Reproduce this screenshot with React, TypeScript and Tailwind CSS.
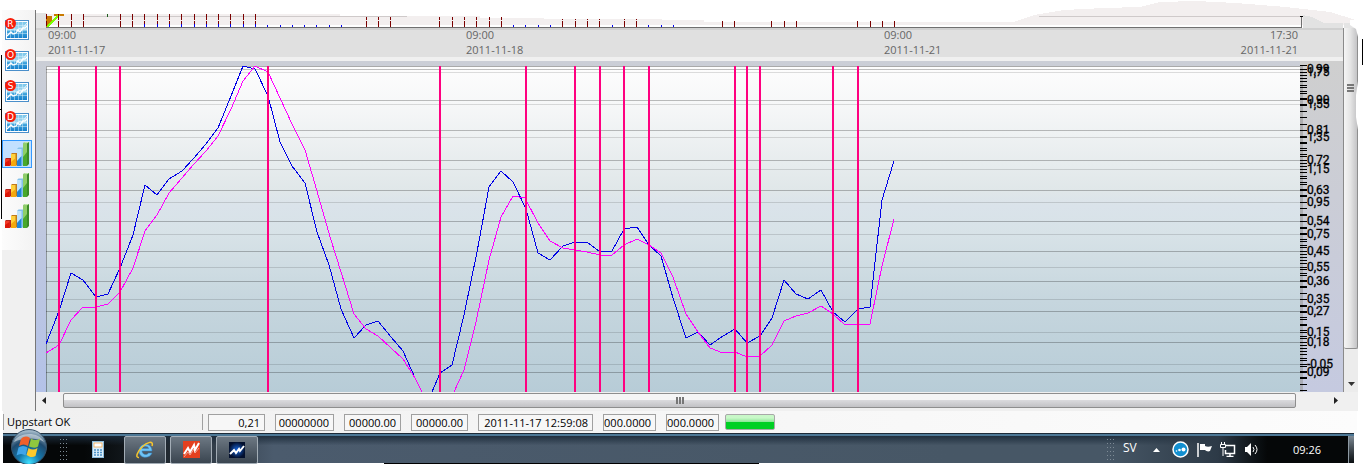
import type { ReactNode } from "react";

const PRIMARY_GRID = [69, 100, 130, 160, 190, 221, 251, 281, 311, 342, 372];
const SECONDARY_GRID = [72, 104, 137, 169, 202, 234, 267, 299, 332, 364];
const PRIMARY_LABELS = ["0,99", "0,90", "0,81", "0,72", "0,63", "0,54", "0,45", "0,36", "0,27", "0,18", "0,09"];
const SECONDARY_LABELS = ["1,75", "1,55", "1,35", "1,15", "0,95", "0,75", "0,55", "0,35", "0,15", "-0,05"];

const SIGNALS = [59, 96, 120, 268, 440, 526, 575, 600, 624, 649, 735, 747, 760, 833, 858];

const FAST_LINE = [
  "46,344 59,311 71,273 83,280 96,297 108,294 120,268 133,235 145,185 157,195 169,179 182,171 194,158 206,144 218,128 231,96 243,66 255,69 268,96 280,142 292,166 305,183 317,232 329,265 341,309 354,338 366,325 378,321 391,337 403,351 415,378 422,392",
  "432,392 440,373 452,365 464,315 477,252 489,187 501,171 513,182 526,209 538,253 550,260 563,246 575,242 587,242 600,252 612,251 624,229 637,227 649,245 661,256 673,298 686,338 698,332 710,345 723,336 735,329 747,343 760,336 772,318 784,280 796,294 808,299 821,290 833,312 845,322 858,309 870,307 882,200 894,161",
];
const SLOW_LINE = [
  "46,353 59,345 71,320 83,307 96,307 108,304 120,292 133,268 145,231 157,215 169,193 182,178 194,164 206,151 218,136 231,109 243,81 255,66 268,72 280,98 292,124 305,150 317,191 331,240 341,272 354,314 366,329 378,336 391,348 403,359 415,378 422,392",
  "454,392 464,370 476,322 489,260 501,217 513,196 525,198 538,223 550,241 563,248 575,250 587,252 600,255 612,255 624,245 637,239 649,245 661,253 673,277 686,314 698,332 710,348 723,353 735,352 747,357 760,356 772,345 784,321 796,316 808,313 821,306 833,314 845,325 858,324 870,324 882,266 894,219",
];

const RED_TICKS = [
  58, 71, 83, 120, 132, 144, 157, 169, 181, 194, 206, 218, 230, 243, 255, 366, 378, 390, 439, 452, 464, 476, 489, 501,
  562, 575, 587, 599, 624, 636, 722, 734, 771, 784, 796, 857, 870, 882, 894,
];
const BLUE_TICKS = [267, 280, 292, 304, 316, 329, 341, 513, 525, 538, 550, 612, 648, 661, 673];

const READOUTS = [
  { id: "value", text: "0,21", width: "w-[57px]" },
  { id: "volume", text: "00000000", width: "w-[59px]" },
  { id: "high", text: "00000.00", width: "w-[57px]" },
  { id: "low", text: "00000.00", width: "w-[57px]" },
  { id: "time", text: "2011-11-17 12:59:08", width: "w-[115px]" },
  { id: "x", text: "000.0000", width: "w-[53px]" },
  { id: "y", text: "000.0000", width: "w-[53px]" },
];

function LineChartIcon({ letter }: { letter: string }) {
  return (
    <svg width="24" height="24" viewBox="0 0 24 24" aria-hidden="true">
      <defs>
        <linearGradient id="sheet" x1="0" y1="0" x2="0" y2="1">
          <stop offset="0" stopColor="#7cc6ea" />
          <stop offset="0.5" stopColor="#a5d9f0" />
          <stop offset="0.6" stopColor="#3fa3dc" />
          <stop offset="1" stopColor="#1580cc" />
        </linearGradient>
      </defs>
      <rect x="0.5" y="2.5" width="23" height="19" fill="#fff" stroke="#4b8fca" />
      <rect x="2" y="4" width="20" height="16" fill="url(#sheet)" />
      <path
        d="M2 7.500h20M2 11.500h20M2 15.500h20M5.500 4v16M9.500 4v16M13.500 4v16M17.500 4v16"
        stroke="#d6f0fb"
        strokeOpacity="0.5"
      />
      <path d="M2 18l2-2 2-2 2 2 3-1 2-3 2 2 3-4 2 0 2-2" fill="none" stroke="#fff" strokeWidth="1.3" />
      <path d="M11 13l4-3 2 1 5-6" fill="none" stroke="#fff" strokeOpacity="0.8" />
      <circle cx="5.500" cy="5.500" r="5.500" fill="#f71d0a" />
      <text x="5.500" y="9" textAnchor="middle" fill="#fff" fontSize="9" className="font-['DejaVu_Sans']">
        {letter}
      </text>
    </svg>
  );
}

function BarChartIcon() {
  return (
    <svg width="24" height="24" viewBox="0 0 24 24" aria-hidden="true">
      <path d="M0 17l1-1h5v7l-1 1H0z" fill="#b3221a" />
      <path d="M0 17h4.500v7H0z" fill="#f23a28" />
      <path d="M0 21l4.500-3v6H0z" fill="#dc1608" />
      <path d="M6 12l1-1h5v12l-1 1H6z" fill="#c07a1c" />
      <path d="M6 12h4.500v12H6z" fill="#ffd23c" />
      <path d="M6 20l4.500-4v8H6z" fill="#f5a80c" />
      <path d="M12 7l1.500-1.500H18V23l-1 1h-5z" fill="#84c1ea" />
      <path d="M12 7h4.500v17H12z" fill="#bfe3fa" />
      <path d="M12 19l4.500-5v10H12z" fill="#1f86d8" />
      <path d="M18 1.500L19.500 0H24v22l-2 2h-4z" fill="#3b8a26" />
      <path d="M18 1.500h4V24h-4z" fill="#8fce68" />
      <path d="M18 15l4-5v14h-4z" fill="#49a82c" />
      <path d="M18 1.500L19.500 0H24l-2 1.500z" fill="#bfe8a4" />
    </svg>
  );
}

function ToolButton({ label, selected, children }: { label: string; selected?: boolean; children: ReactNode }) {
  return (
    <button
      type="button"
      aria-label={label}
      className={
        selected
          ? "flex h-7 w-[30px] items-center justify-center border border-[#3399ff] bg-[#c2e0ff]"
          : "flex h-7 w-[30px] items-center justify-center"
      }
    >
      {children}
    </button>
  );
}

function Toolbar() {
  return (
    <aside className="mt-2.5 w-[34px] shrink-0 border-r border-[#777] bg-[#f0f0f0]">
      <div className="flex h-60 flex-col gap-[3px] bg-linear-to-r from-[#fcfcfc] to-[#f3f3f3] pt-1.5">
        {["R", "O", "S", "D"].map((letter) => (
          <ToolButton key={letter} label={`Chart ${letter}`}>
            <LineChartIcon letter={letter} />
          </ToolButton>
        ))}
        <ToolButton label="Bars 1" selected>
          <BarChartIcon />
        </ToolButton>
        <ToolButton label="Bars 2">
          <BarChartIcon />
        </ToolButton>
        <ToolButton label="Bars 3">
          <BarChartIcon />
        </ToolButton>
      </div>
    </aside>
  );
}

// Lower end of the volume pane, with its ragged upper edge
function VolumeStrip() {
  return (
    <svg
      className="block h-7 w-full"
      viewBox="36 0 1322 28"
      preserveAspectRatio="none"
      shapeRendering="crispEdges"
      aria-hidden="true"
    >
      <path
        d="M36 13h10l1 1h293v2h140v2h64v1h118v1h42v2h310l20-7 30-5 40-2 36-1 20-5 36-1 40 2 50 4 44 5 26 8h28v5H36z"
        fill="#f3efef"
      />
      <path d="M36 13h10v15H36zM1303 15l9 2 12 6h19v5h-40z" fill="#e2e2e2" />
      <path d="M1344 23h6l8 6v0h-14z" fill="#e4e4e4" />
      <path d="M83 16.500h324M1039 16.500h262" stroke="#cfcaca" />
      <path d="M46 16h6v6l-6 6zM54 14h10v2h-10z" fill="#c97a00" />
      <path d="M47 27L59 15" stroke="#7dff00" strokeWidth="2" />
      <path d="M46.500 14v13" stroke="#7a0000" strokeDasharray="5 2" />
      <path d="M107.500 14v3" stroke="#1d5c1d" />
      {RED_TICKS.map((x) => (
        <path
          key={x}
          d={`M${x + 0.5} 27V${x < 345 ? 14 : x < 510 ? 17 : x < 700 ? 19 : 21}`}
          stroke="#7a0000"
          strokeDasharray="6 1"
        />
      ))}
      {RED_TICKS.filter((x) => x > 140 && x < 260).map((x) => (
        <path key={x} d={`M${x + 0.5} 24v3`} stroke="#0000f0" />
      ))}
      {BLUE_TICKS.map((x) => (
        <path key={x} d={`M${x + 0.5} 25v2`} stroke="#0000f0" />
      ))}
      <path d="M46 27.500h1255" stroke="#707070" />
      <path d="M1301.500 16v12" stroke="#707070" />
      <path d="M1300 16.500h3" stroke="#000" />
    </svg>
  );
}

function TimeAxis() {
  return (
    <div className="h-[33px] border-b-4 border-[#f0f0f0] bg-[#e0e0e0] text-[11px] leading-[15px] text-[#666]">
      <div className="grid h-[29px] grid-cols-[418fr_418fr_418fr] border-t-2 border-[#d0d0d0] pr-[43px] pl-2.5">
        <div className="-mt-[3px] pl-0.5">
          <p>09:00</p>
          <p>2011-11-17</p>
        </div>
        <div className="-mt-[3px] pl-0.5">
          <p>09:00</p>
          <p>2011-11-18</p>
        </div>
        <div className="-mt-[3px] flex justify-between px-0.5">
          <div>
            <p>09:00</p>
            <p>2011-11-21</p>
          </div>
          <div className="text-right">
            <p>17:30</p>
            <p>2011-11-21</p>
          </div>
        </div>
      </div>
    </div>
  );
}

function Plot() {
  return (
    <svg
      className="h-full w-0 grow"
      viewBox="46 66 1254 326"
      preserveAspectRatio="none"
      shapeRendering="crispEdges"
      role="img"
      aria-label="Price oscillator"
    >
      <defs>
        <linearGradient id="plot" x1="0" y1="0" x2="0" y2="1">
          <stop offset="0" stopColor="#fdfdfd" />
          <stop offset="0.12" stopColor="#f6f7f8" />
          <stop offset="0.38" stopColor="#e0e7e9" />
          <stop offset="0.43" stopColor="#dae3ea" />
          <stop offset="0.52" stopColor="#d7e2e7" />
          <stop offset="0.72" stopColor="#c6d6de" />
          <stop offset="1" stopColor="#b7ccd7" />
        </linearGradient>
      </defs>
      <rect x="46" y="66" width="1254" height="326" fill="url(#plot)" />
      <path d="M46 66.500h1254M46.500 66v326" stroke="#000" strokeOpacity="0.33" />
      {PRIMARY_GRID.map((y) => (
        <path key={y} d={`M46 ${y + 0.5}h1254`} stroke="#000" strokeOpacity="0.25" />
      ))}
      {SECONDARY_GRID.map((y) => (
        <path key={y} d={`M46 ${y + 0.5}h1254`} stroke="#000" strokeOpacity="0.13" />
      ))}
      {FAST_LINE.map((points) => (
        <polyline key={points} points={points} fill="none" stroke="#0000e6" vectorEffect="non-scaling-stroke" />
      ))}
      {SLOW_LINE.map((points) => (
        <polyline key={points} points={points} fill="none" stroke="#ff00ff" vectorEffect="non-scaling-stroke" />
      ))}
      {SIGNALS.map((x) => (
        <path key={x} d={`M${x} 66v326`} stroke="#ff0080" strokeWidth="2" />
      ))}
    </svg>
  );
}

function ValueAxis() {
  const primaryTicks = Array.from({ length: 54 }, (_, i) => Math.round(69 + i * 6.06));
  const secondaryTicks = Array.from({ length: 50 }, (_, i) => Math.round(65 + i * 6.5));
  return (
    <svg
      className="block h-[331px] w-[43px] shrink-0 font-['Roboto',sans-serif] text-[12px]"
      viewBox="1300 61 43 331"
      shapeRendering="crispEdges"
    >
      <rect x="1300" y="66" width="3" height="326" fill="#999" fillOpacity="0.6" />
      {[...primaryTicks, ...secondaryTicks].map((y, i) => (
        <path key={i} d={`M1300 ${y + 0.5}h7`} stroke="#000" />
      ))}
      {PRIMARY_LABELS.map((label, i) => (
        <text key={label} x="1307" y={PRIMARY_GRID[i] + 4} stroke="#000" strokeWidth="0.3">
          {label}
        </text>
      ))}
      {SECONDARY_LABELS.map((label, i) => (
        <text key={label} x="1307" y={SECONDARY_GRID[i] + 4} stroke="#000" strokeWidth="0.3">
          {label}
        </text>
      ))}
    </svg>
  );
}

function VerticalScrollbar() {
  return (
    <div className="flex w-[15px] flex-col border-l border-[#8a8a8a] bg-[#ececec]">
      <button
        type="button"
        aria-label="Scroll chart vertically"
        className="flex h-[321px] flex-col items-center gap-px rounded-b-xs border-r border-b border-[#8e8e8e] bg-linear-to-r from-[#f5f5f5] via-[#e4e4e4] to-[#c4c4c6] pt-14"
      >
        <span className="h-0.5 w-[7px] bg-[#777]" />
        <span className="h-0.5 w-[7px] bg-[#777]" />
        <span className="h-0.5 w-[7px] bg-[#777]" />
      </button>
      <button type="button" aria-label="Scroll down" className="flex grow items-end justify-center pb-1.5">
        <svg width="7" height="4" viewBox="0 0 7 4" aria-hidden="true">
          <path d="M0 0h7L3.500 4z" fill="#333" />
        </svg>
      </button>
    </div>
  );
}

function HorizontalScrollbar() {
  return (
    <div className="flex h-[19px] items-start bg-[#f0f0f0] pt-px pr-4">
      <button type="button" aria-label="Scroll left" className="flex h-[15px] w-[27px] items-center pl-1.5">
        <svg width="4" height="7" viewBox="0 0 4 7" aria-hidden="true">
          <path d="M4 0v7L0 3.500z" fill="#222" />
        </svg>
      </button>
      <button
        type="button"
        aria-label="Scroll chart in time"
        className="flex h-[15px] grow items-center justify-center gap-px rounded-xs border border-[#8e8e8e] bg-linear-to-b from-[#f5f5f5] from-45% via-[#d9d9dc] via-50% to-[#c2c2c5]"
      >
        <span className="h-[7px] w-0.5 bg-[#777]" />
        <span className="h-[7px] w-0.5 bg-[#777]" />
        <span className="h-[7px] w-0.5 bg-[#777]" />
      </button>
      <button type="button" aria-label="Scroll right" className="flex h-[15px] w-[46px] items-center justify-end pr-1">
        <svg width="4" height="7" viewBox="0 0 4 7" aria-hidden="true">
          <path d="M0 0v7l4-3.500z" fill="#222" />
        </svg>
      </button>
    </div>
  );
}

function StatusBar() {
  return (
    <footer className="mr-1.5 ml-[3px] flex h-[22px] items-center bg-linear-to-r from-[#f0f0f0] to-[#fcfcfc] text-[11px] leading-[15px] text-black">
      <p className="mr-[5px] h-4 w-[200px] border-r border-l border-[#a0a0a0] pl-[3px]">Uppstart OK</p>
      <div className="flex items-center gap-2.5">
        {READOUTS.map((item) => (
          <p key={item.id} className={`${item.width} h-[17px] border border-[#a0a0a0] bg-[#f7f7f7] pr-1 text-right whitespace-nowrap`}>
            {item.text}
          </p>
        ))}
      </div>
      <div
        role="progressbar"
        aria-label="Loading"
        aria-valuenow={100}
        className="ml-1.5 h-4 w-[50px] rounded-xs border border-[#a8a8a8] bg-linear-to-b from-[#c8f8c8] from-20% via-[#8fe89a] via-48% to-[#00d024] to-52%"
      />
    </footer>
  );
}

function StartOrb() {
  return (
    <svg width="38" height="35" viewBox="0 0 38 35" aria-hidden="true">
      <defs>
        <radialGradient id="orb" cx="0.5" cy="0.95" r="0.9">
          <stop offset="0" stopColor="#3fe0ff" />
          <stop offset="0.35" stopColor="#1478ac" />
          <stop offset="0.7" stopColor="#1f4a6e" />
          <stop offset="1" stopColor="#9fb6c6" />
        </radialGradient>
      </defs>
      <circle cx="19" cy="18" r="17.500" fill="url(#orb)" stroke="#38536a" />
      <path d="M4 13C8 3 29 2 34 13C26 8 12 9 4 13z" fill="#fff" fillOpacity="0.45" />
      <path d="M11 10c3-3 6-3 9-1l-2 8c-3-2-6-2-9 0z" fill="#f0602a" />
      <path d="M21 9.500c3 2 6 2 9 0l-2 8c-3 2-6 1-9 0z" fill="#8fc73e" />
      <path d="M8.500 18.500c3-2 6-2 9 0l-2 8c-3-2-6-2-9 0z" fill="#3fa4e8" />
      <path d="M18.500 19c3 2 6 2 9 0l-2 8c-3 2-6 1-9-1z" fill="#fdc92c" />
    </svg>
  );
}

function Grip() {
  return (
    <svg width="8" height="22" viewBox="0 0 8 22" shapeRendering="crispEdges" aria-hidden="true">
      {[0, 4, 8, 12, 16, 20].map((y) => (
        <path key={y} d={`M0 ${y + 0.5}h1M3 ${y + 0.5}h1M6 ${y + 0.5}h1`} stroke="#7e8b96" />
      ))}
    </svg>
  );
}

function TaskButton({ label, children }: { label: string; children: ReactNode }) {
  return (
    <button
      type="button"
      aria-label={label}
      className="flex h-7 w-[42px] items-center justify-center rounded-xs border border-[#a3adb6] bg-linear-to-b from-[#6d7883] to-[#3a4550]"
    >
      {children}
    </button>
  );
}

function Taskbar() {
  return (
    <nav className="mr-[9px] ml-[3px] flex h-[30px] items-center border-t border-[#1d2b38] bg-linear-to-r from-[#050708] from-6% via-[#4b5b6d] via-20% to-[#475766] to-70% text-white">
      <div className="flex h-full w-full items-center border-t-2 border-[#4d7896] bg-linear-to-b from-[#1c2b3a]/90 to-transparent to-35%">
        <button type="button" aria-label="Start" className="-mt-1.5 ml-[7px] h-[35px]">
          <StartOrb />
        </button>
        <div className="ml-3">
          <Grip />
        </div>
        <button type="button" aria-label="Calculator" className="mr-5 ml-6">
          <svg width="12" height="17" viewBox="0 0 12 17" aria-hidden="true">
            <rect x="0.500" y="0.500" width="11" height="16" fill="#dceefa" stroke="#8dbbd9" />
            <rect x="2" y="2" width="8" height="4" fill="#fff" stroke="#f4a13a" strokeWidth="0.700" />
            <path d="M2 9h8M2 11.500h8M2 14h8" stroke="#4d93c8" strokeWidth="1.500" strokeDasharray="2 1" />
          </svg>
        </button>
        <div className="flex gap-1">
          <TaskButton label="Internet Explorer">
            <svg width="18" height="18" viewBox="0 0 18 18" aria-hidden="true">
              <path
                d="M16 10H6c0 3 4 5 6.500 2H16c-2 6-13 6-13-2 0-9 13-9 13 0zM6.200 7.500h6.500c-.5-3-6-3-6.500 0z"
                fill="#6fc3f5"
                stroke="#2f86c8"
                strokeWidth="0.500"
              />
              <path d="M16 5c2-6-5-4-10 1C1 11-1 17 3 16.500" fill="none" stroke="#f6c52c" strokeWidth="1.500" />
            </svg>
          </TaskButton>
          <TaskButton label="Trading terminal">
            <svg width="17" height="17" viewBox="0 0 17 17" aria-hidden="true">
              <path d="M0 0h17v17H0z" fill="#e3401f" />
              <path d="M1 13l4-6 2 4 4-7 1 5 4-7" fill="none" stroke="#fff" strokeWidth="2" />
              <path d="M1 16l4-5 2 3 4-6 1 4 4-5" fill="none" stroke="#fff" strokeOpacity="0.500" />
            </svg>
          </TaskButton>
          <TaskButton label="Chart program">
            <svg width="16" height="16" viewBox="0 0 16 16" aria-hidden="true">
              <defs>
                <radialGradient id="night">
                  <stop offset="0" stopColor="#1667e0" />
                  <stop offset="1" stopColor="#03102e" />
                </radialGradient>
              </defs>
              <path d="M0 0h16v16H0z" fill="url(#night)" />
              <path d="M1 12l4-4 2 3 3-4 1 2 4-5" fill="none" stroke="#fff" strokeWidth="2" />
            </svg>
          </TaskButton>
        </div>
        <div className="ml-auto flex h-full items-center bg-linear-to-r from-transparent via-[#2d3a47] via-45% to-[#050708] to-65%">
          <Grip />
          <span className="ml-2 w-[30px] pb-1 text-[12px] leading-4">SV</span>
          <button type="button" aria-label="Show hidden icons">
            <svg width="7" height="4" viewBox="0 0 7 4" aria-hidden="true">
              <path d="M3.500 0L7 4H0z" fill="#fff" />
            </svg>
          </button>
          <div className="ml-3 flex items-center gap-2">
            <svg width="17" height="17" viewBox="0 0 17 17" aria-hidden="true">
              <circle cx="8.500" cy="8.500" r="7.500" fill="#128fd0" stroke="#fff" strokeWidth="1.500" />
              <circle cx="7.500" cy="9" r="1.300" fill="#fff" />
              <circle cx="11.500" cy="8.500" r="2" fill="#fff" />
              <circle cx="4.500" cy="10" r="0.800" fill="#fff" />
            </svg>
            <svg width="15" height="15" viewBox="0 0 15 15" aria-hidden="true">
              <path d="M1 1v14" stroke="#fff" strokeWidth="1.500" />
              <path d="M3 2h5v2c2 1 4 1 7 0l-2 5c-2 1-4 0-5-1H3z" fill="#fff" />
            </svg>
            <svg width="16" height="15" viewBox="0 0 16 15" fill="none" stroke="#fff" aria-hidden="true">
              <path d="M6 3.500h8.500v8H5.500V8M10 12v2M6.500 14.500h7" strokeWidth="1.500" />
              <path d="M1.500 0v3M4.500 0v3M0.500 2.500h5v3h-5zM3 6v8" />
            </svg>
            <svg width="15" height="15" viewBox="0 0 15 15" aria-hidden="true">
              <path d="M1 5h2l4-4v13l-4-4H1z" fill="#fff" />
              <path d="M9 5q2 2.500 0 5M11 3q4 4.500 0 9" fill="none" stroke="#fff" />
            </svg>
          </div>
          <time className="ml-[34px] w-[55px] text-[11px] leading-4">09:26</time>
          <button
            type="button"
            aria-label="Show desktop"
            className="h-full w-1.5 border-l border-[#8d99a3] bg-linear-to-b from-[#7d8a95] to-[#0b0f12]"
          />
        </div>
      </div>
    </nav>
  );
}

export default function App() {
  return (
    <div className="relative bg-white font-['Open_Sans',sans-serif]">
      <div className="flex pr-[5px] pl-0.5">
        <Toolbar />
        <main className="flex min-w-0 grow flex-col">
          <VolumeStrip />
          <div className="flex">
            <div className="min-w-0 grow">
              <TimeAxis />
              <div className="flex h-[331px] bg-linear-to-b from-[#cbced6] to-[#b4c2e8]">
                <div className="flex w-0 grow pt-[5px] pl-2.5">
                  <Plot />
                </div>
                <div className="bg-linear-to-b from-[#cfcfcf] to-[#c5cae0]">
                  <ValueAxis />
                </div>
              </div>
            </div>
            <VerticalScrollbar />
          </div>
          <HorizontalScrollbar />
        </main>
      </div>
      <StatusBar />
      <Taskbar />
      {/* ragged outer edges */}
      <svg className="absolute top-0 left-0" width="3" height="220" viewBox="0 0 3 220" shapeRendering="crispEdges" aria-hidden="true">
        <path d="M1.500 55v164M0 109.500h1" stroke="#000" />
      </svg>
      <svg className="absolute top-0 right-0" width="13" height="130" viewBox="0 0 13 130" aria-hidden="true">
        <path d="M0 20v5l6 4 2 8v44l-2 14v22l2 13h5V20z" fill="#fff" />
        <path d="M12.500 39v26" stroke="#000" />
      </svg>
      <div className="mr-[604px] ml-[384px] h-px bg-black" />
    </div>
  );
}
